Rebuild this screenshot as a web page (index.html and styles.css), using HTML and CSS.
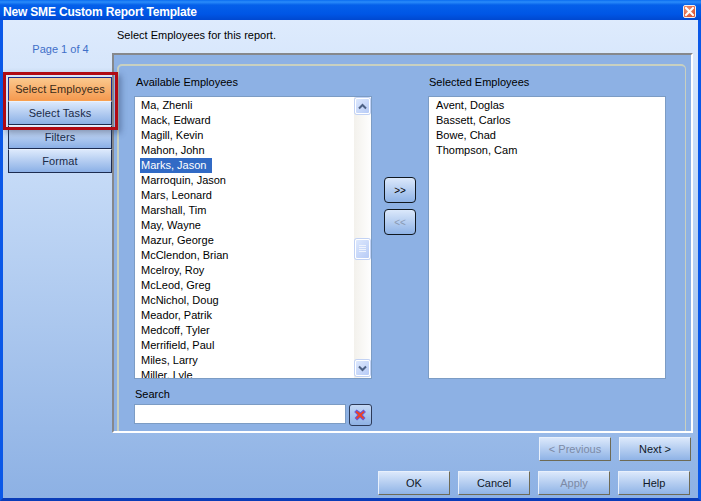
FILE: index.html
```html
<!DOCTYPE html>
<html lang="en">
<head>
<meta charset="utf-8">
<title>New SME Custom Report Template</title>
<link rel="stylesheet" href="styles.css">
</head>
<body>
<div class="window">
  <header class="titlebar">
    <span class="title">New SME Custom Report Template</span>
    <button class="close" aria-label="Close">
      <svg width="13" height="13" viewBox="0 0 13 13"><path d="M3 3l7 7M10 3l-7 7" stroke="#fff" stroke-width="2" stroke-linecap="square" fill="none"/></svg>
    </button>
  </header>
  <div class="client">
    <div class="upper">
      <nav class="nav">
        <div class="page">Page 1 of 4</div>
        <button class="navbtn active">Select Employees</button>
        <button class="navbtn">Select Tasks</button>
        <button class="navbtn">Filters</button>
        <button class="navbtn">Format</button>
        <div class="highlight"></div>
      </nav>
      <main class="main">
        <div class="instruction">Select Employees for this report.</div>
        <section class="panel">
          <div class="group">
            <div class="col">
              <div class="label">Available Employees</div>
              <div class="list">
                <ul class="items">
                  <li>Ma, Zhenli</li><li>Mack, Edward</li><li>Magill, Kevin</li><li>Mahon, John</li>
                  <li><span class="sel">Marks, Jason</span></li>
                  <li>Marroquin, Jason</li><li>Mars, Leonard</li><li>Marshall, Tim</li><li>May, Wayne</li>
                  <li>Mazur, George</li><li>McClendon, Brian</li><li>Mcelroy, Roy</li><li>McLeod, Greg</li>
                  <li>McNichol, Doug</li><li>Meador, Patrik</li><li>Medcoff, Tyler</li><li>Merrifield, Paul</li>
                  <li>Miles, Larry</li><li>Miller, Lyle</li>
                </ul>
                <div class="scrollbar">
                  <div class="sbtn"><svg width="9" height="7" viewBox="0 0 9 7"><path d="M1 5.500l3.500-3.500 3.500 3.500" stroke="#4d6185" stroke-width="2" fill="none"/></svg></div>
                  <div class="track">
                    <div class="sbtn thumb"><svg width="7" height="8" viewBox="0 0 7 8"><path d="M0 .5h7M0 2.500h7M0 4.500h7M0 6.500h7" stroke="#eef3fd" fill="none"/></svg></div>
                  </div>
                  <div class="sbtn"><svg width="9" height="7" viewBox="0 0 9 7"><path d="M1 1.500l3.500 3.500 3.500-3.500" stroke="#4d6185" stroke-width="2" fill="none"/></svg></div>
                </div>
              </div>
              <div class="search-label">Search</div>
              <div class="search-row">
                <input class="search" type="text" aria-label="Search">
                <button class="clear" aria-label="Clear">
                  <svg width="13" height="12" viewBox="0 0 14 14"><path d="M2.500 1.500l4.500 3 3.500-3 2 2-3.500 3.500 3 3.500-2 2-3.500-3-3.500 3-2-2 3-3.500-3.500-3.500z" fill="#f4421c" stroke="#6a58d8" stroke-width="1.200"/></svg>
                </button>
              </div>
            </div>
            <div class="mid">
              <button class="move">&gt;&gt;</button>
              <button class="move disabled">&lt;&lt;</button>
            </div>
            <div class="col-right">
              <div class="label">Selected Employees</div>
              <ul class="list items right-list">
                <li>Avent, Doglas</li><li>Bassett, Carlos</li><li>Bowe, Chad</li><li>Thompson, Cam</li>
              </ul>
            </div>
          </div>
        </section>
      </main>
    </div>
    <div class="row row-nav">
      <button class="btn disabled">&lt; Previous</button>
      <button class="btn">Next &gt;</button>
    </div>
    <div class="row row-actions">
      <button class="btn">OK</button>
      <button class="btn">Cancel</button>
      <button class="btn disabled">Apply</button>
      <button class="btn">Help</button>
    </div>
  </div>
</div>
</body>
</html>
```

FILE: styles.css
```css
* { box-sizing: border-box; }
html, body { margin: 0; padding: 0; }
body {
  width: 701px;
  height: 501px;
  overflow: hidden;
  font-family: "Liberation Sans", Arial, sans-serif;
  font-size: 11px;
  color: #000;
}
button { font: inherit; color: inherit; padding: 0; cursor: default; }
.window {
  width: 701px;
  height: 501px;
  display: flex;
  flex-direction: column;
  background: #0054e3;
  border-left: 3px solid #0a58e8;
  border-right: 3px solid #0a58e8;
  border-bottom: 3px solid #0a3cb8;
}
.titlebar {
  height: 20px;
  margin: 0 -3px;
  padding: 4px 5px 0 3px;
  display: flex;
  align-items: center;
  justify-content: space-between;
  background: linear-gradient(#0a6cf0 0, #2a8cfa 2px, #0460ea 5px, #0056e6 14px, #0048d0 20px);
}
.title {
  color: #fff;
  font-size: 12px;
  font-weight: bold;
  letter-spacing: -.18px;
}
.close {
  width: 13px;
  height: 13px;
  display: flex;
  border: 1px solid #f4f0ee;
  border-radius: 2px;
  background: radial-gradient(circle at 35% 35%, #ee9a7c, #d8401c);
  margin-top: -2px;
}
.close svg { margin: -1px; }
.client {
  flex: 1;
  display: flex;
  flex-direction: column;
  background: linear-gradient(#deebfd 0, #c6dbf7 150px, #8db1e4 478px);
  padding: 0 5px;
}
.upper { display: flex; }
.nav {
  position: relative;
  width: 104px;
  padding-top: 23px;
  display: flex;
  flex-direction: column;
}
.page {
  height: 34px;
  color: #3f6fc8;
  text-align: center;
  padding-left: 1px;
}
.navbtn {
  height: 24px;
  color: #1a2a48;
  letter-spacing: .1px;
  background: linear-gradient(#dce9fc, #8bb0e6);
  border: 1px solid #1c2c50;
  border-top-color: #eaf2fd;
  border-right-color: #1c2c50;
}
.navbtn.active {
  color: #3a2a18;
  background: linear-gradient(#fbc98e, #f59a50);
  border-color: #1c2c8c #1c2c8c #f8a050 #1c2c8c;
}
.highlight {
  position: absolute;
  left: -5px;
  top: 52px;
  width: 115px;
  height: 58px;
  border: 3px solid #b00a14;
  box-shadow: 3px 3px 6px rgba(40, 60, 100, .45);
}
.main { width: 581px; }
.instruction { height: 33px; padding: 9px 0 0 5px; }
.panel {
  height: 380px;
  overflow: hidden;
  background: #8db1e4;
  border: 2px solid #fff;
  border-top-color: #86888c;
  border-left-color: #86888c;
  padding: 9px 5px 0 3px;
}
.group {
  height: 400px;
  display: flex;
  border: 2px solid #c8d0c0;
  border-right-width: 1px;
  border-radius: 5px 5px 0 0;
  padding: 10px 0 0 15px;
}
.col { width: 238px; }
.label { height: 20px; line-height: 13px; padding-left: 2px; }
.list {
  height: 283px;
  background: #fff;
  border: 1px solid #7c9cc4;
  display: flex;
  overflow: hidden;
}
.items {
  list-style: none;
  margin: 0;
  padding: 1px 0 0 6px;
  flex: 1;
  overflow: hidden;
}
.items li { height: 15px; line-height: 15px; }
.sel {
  display: inline-block;
  height: 15px;
  width: 72px;
  margin-left: -1px;
  background: #316ac5;
  color: #fff;
  padding-left: 1px;
}
.right-list { display: block; padding-left: 7px; }
.scrollbar {
  width: 18px;
  display: flex;
  flex-direction: column;
  padding: 1px 2px 2px 1px;
  background: linear-gradient(90deg, #f3f1ec, #fefefe);
  margin-right: -1px;
  border-right: 1px solid #fff;
}
.sbtn {
  width: 15px;
  height: 16px;
  display: flex;
  align-items: center;
  justify-content: center;
  background: linear-gradient(135deg, #dde8fd, #b7cbf6);
  border: 1px solid #fff;
  border-radius: 2px;
  box-shadow: 0 0 0 1px #c2d2f4;
  flex: none;
}
.track { flex: 1; padding-top: 125px; }
.thumb { height: 20px; }
.search-label { height: 16px; margin-top: 9px; padding-left: 1px; line-height: 13px; }
.search-row { display: flex; gap: 3px; }
.search {
  width: 212px;
  height: 20px;
  background: #fff;
  border: 1px solid #7c9cc4;
  padding: 0;
}
.clear {
  width: 23px;
  height: 22px;
  display: flex;
  align-items: center;
  justify-content: center;
  border: 1px solid #2c3a58;
  border-radius: 3px;
  background: linear-gradient(#c4d8f5, #8fb2e4);
}
.mid {
  width: 56px;
  padding: 101px 0 0 12px;
  display: flex;
  flex-direction: column;
  gap: 6px;
}
.move {
  width: 32px;
  height: 26px;
  border: 1px solid #101820;
  border-radius: 4px;
  background: linear-gradient(#dbe8fb, #8fb3e6);
  font-size: 10px;
}
.move.disabled { color: #8a9ab4; }
.col-right { width: 238px; }
.col-right .label { padding-left: 1px; }
.row { display: flex; justify-content: flex-end; gap: 8px; }
.row-nav { margin-top: 4px; padding-right: 2px; }
.row-actions { margin-top: 10px; padding-right: 3px; }
.btn {
  width: 72px;
  height: 24px;
  background: linear-gradient(#dbe8fb, #8fb3e6);
  border: 1px solid #e8f0fc;
  border-right-color: #6e6a54;
  border-bottom-color: #6e6a54;
  color: #101828;
}
.btn.disabled { color: #7c8aa6; }
```
